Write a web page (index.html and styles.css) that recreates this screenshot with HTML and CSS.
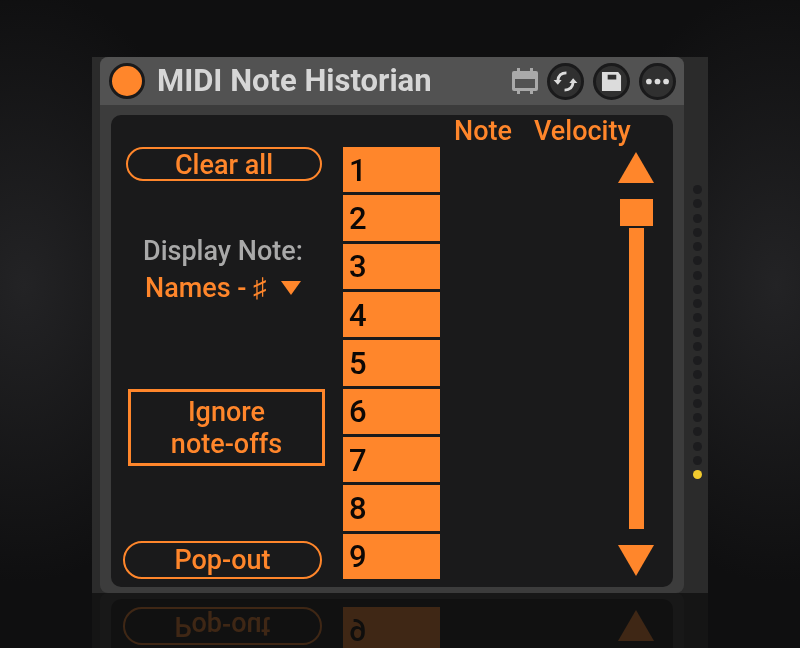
FILE: index.html
```html
<!DOCTYPE html>
<html lang="en">
<head>
    <meta charset="UTF-8">
    <meta name="viewport" content="width=device-width, initial-scale=1.0">
    <title>MIDI Note Historian</title>
    <link rel="stylesheet" href="styles.css">
</head>
<body>

    <main class="device">
        <section class="panel">
            <header class="titlebar">
                <button type="button" class="power" aria-label="Device on"></button>
                <h1>MIDI Note Historian</h1>
                <svg class="view-icon" viewBox="0 0 26 26" aria-hidden="true">
                    <path d="M5 0h3v3h10V0h3v3h3q2 0 2 2v16q0 2-2 2h-3v3h-3v-3H8v3H5v-3H2q-2 0-2-2V5q0-2 2-2h3z M3 11v9h20v-9z" fill="#a9a9a9" fill-rule="evenodd"/>
                </svg>
                <button type="button" class="round" aria-label="Hot-swap">
                    <svg viewBox="0 0 26 22">
                        <path d="M14 2C8.500 2 5.500 5 5 10M12 20C17.500 20 20.500 17 21 12" fill="none" stroke="#dcdcdc" stroke-width="3"/>
                        <path d="M0.500 9.500h8.500l-4 5zM17 12.500h8.500l-4.500-5z" fill="#dcdcdc"/>
                    </svg>
                </button>
                <button type="button" class="round" aria-label="Save preset">
                    <svg viewBox="0 0 26 22">
                        <path d="M3 1h17l3 4v16H3zM9 4v5h9V4z" fill="#dcdcdc" fill-rule="evenodd"/>
                    </svg>
                </button>
                <button type="button" class="round" aria-label="More options">
                    <svg viewBox="0 0 26 22">
                        <circle cx="4" cy="11" r="3" fill="#dcdcdc"/>
                        <circle cx="13" cy="11" r="3" fill="#dcdcdc"/>
                        <circle cx="22" cy="11" r="3" fill="#dcdcdc"/>
                    </svg>
                </button>
            </header>

            <div class="screen">
                <div class="controls">
                    <button type="button" class="pill">Clear all</button>
                    <div class="display">
                        <label for="noteDisplay">Display Note:</label>
                        <div class="picker">
                            <select id="noteDisplay">
                                <option>Names - ♯</option>
                            </select>
                            <svg class="caret" viewBox="0 0 20 14" aria-hidden="true"><path d="M0 0h20L10 14z" fill="#ff862b"/></svg>
                        </div>
                    </div>
                    <button type="button" class="toggle">Ignore<br>note-offs</button>
                    <button type="button" class="pill popout">Pop-out</button>
                </div>

                <ol class="slots">
                    <li>1</li>
                    <li>2</li>
                    <li>3</li>
                    <li>4</li>
                    <li>5</li>
                    <li>6</li>
                    <li>7</li>
                    <li>8</li>
                    <li>9</li>
                </ol>

                <div class="history">
                    <div class="headings">
                        <span>Note</span>
                        <span>Velocity</span>
                    </div>
                    <div class="scroller">
                        <button type="button" class="arrow" aria-label="Scroll up">
                            <svg viewBox="0 0 36 31"><path d="M18 0l18 31H0z" fill="#ff862b"/></svg>
                        </button>
                        <input type="range" class="scroll" min="0" max="100" value="0" aria-label="Scroll history">
                        <button type="button" class="arrow" aria-label="Scroll down">
                            <svg viewBox="0 0 36 31"><path d="M0 0h36L18 31z" fill="#ff862b"/></svg>
                        </button>
                    </div>
                </div>
            </div>
        </section>

        <div class="meter">
            <i></i><i></i><i></i><i></i><i></i><i></i><i></i>
            <i></i><i></i><i></i><i></i><i></i><i></i><i></i>
            <i></i><i></i><i></i><i></i><i></i><i></i><i class="lit"></i>
        </div>
    </main>

</body>
</html>
```
FILE: styles.css
```css
* {
    box-sizing: border-box;
}
html {
    height: 100%;
    overflow: hidden;
}
body {
    margin: 0;
    min-height: 100%;
    padding-top: 57px;
    overflow: hidden;
    font-family: Roboto, "Liberation Sans", sans-serif;
    font-size: 27px;
    font-weight: 500;
    line-height: 32px;
    color: #ff862b;
    background:
        radial-gradient(ellipse 24% 46% at 3% 44%, #232325, transparent),
        radial-gradient(ellipse 24% 46% at 97% 44%, #232325, transparent),
        #0f0f10;
}
button, select {
    font: inherit;
    color: inherit;
    background: none;
    border: none;
    padding: 0;
    cursor: pointer;
}
svg {
    display: block;
}
.device {
    width: 77%;
    margin: 0 auto;
    padding-left: 8px;
    display: flex;
    background-color: #2b2b2b;
    -webkit-box-reflect: below 0 linear-gradient(rgba(0, 0, 0, 0.2), rgba(0, 0, 0, 0.2));
}
.panel {
    flex: 1;
    padding-bottom: 6px;
    background-color: #3c3c3c;
    border-radius: 8px;
    overflow: hidden;
}

/* title bar */
.titlebar {
    display: flex;
    align-items: center;
    gap: 9px;
    height: 48px;
    padding: 0 8px 0 9px;
    background-color: #525252;
}
.titlebar h1 {
    flex: 1;
    margin: 0 0 0 3px;
    font-size: 31px;
    font-weight: 700;
    color: #d6d6d6;
}
.power {
    width: 36px;
    height: 36px;
    border: 3px solid #1a1a1b;
    border-radius: 50%;
    background-color: #ff862b;
}
.view-icon {
    width: 26px;
    height: 26px;
}
.round {
    display: grid;
    place-items: center;
    width: 37px;
    height: 37px;
    border: 3px solid #1a1a1b;
    border-radius: 50%;
    background-color: #303030;
}
.round svg {
    width: 25px;
    height: 21px;
}

/* main screen */
.screen {
    display: grid;
    grid-template-columns: 1fr 97px 202px;
    column-gap: 14px;
    margin: 10px 11px 0;
    padding: 0 17px 8px 12px;
    border-radius: 10px;
    background-color: #1a1a1b;
}
.controls {
    display: flex;
    flex-direction: column;
    padding: 32px 4px 0 0;
}
.pill {
    height: 34px;
    margin: 0 3px;
    border: 2px solid #ff862b;
    border-radius: 20px;
}
.popout {
    height: 38px;
    margin: auto 3px 0 0;
}
.display {
    margin: 54px 22px 0 20px;
}
.display label {
    display: block;
    margin-bottom: 5px;
    color: #a9a9a9;
    white-space: nowrap;
}
.picker {
    display: grid;
    align-items: center;
    padding-right: 2px;
}
.picker select, .caret {
    grid-area: 1 / 1;
}
.picker select {
    appearance: none;
    padding-left: 2px;
}
.caret {
    justify-self: end;
    width: 20px;
    height: 14px;
    pointer-events: none;
}
.toggle {
    height: 77px;
    margin-top: 85px;
    margin-left: 5px;
    border: 3px solid #ff862b;
}
.slots {
    display: grid;
    grid-auto-rows: 1fr;
    gap: 3px;
    min-height: 432px;
    margin: 32px 0 0;
    padding: 0;
    list-style: none;
}
.slots li {
    display: flex;
    align-items: center;
    padding: 2px 0 0 6px;
    font-size: 31px;
    color: #0d0805;
    background-color: #ff862b;
}
.history {
    display: flex;
    flex-direction: column;
}
.headings {
    display: flex;
    gap: 22px;
}
.scroller {
    display: flex;
    flex: 1;
    flex-direction: column;
    align-items: center;
    align-self: flex-end;
    gap: 16px;
    padding: 5px 2px 3px 0;
}
.arrow svg {
    width: 36px;
    height: 31px;
}
.scroll {
    flex: 1;
    width: 33px;
    margin: 0;
    writing-mode: vertical-lr;
    appearance: none;
    background: linear-gradient(#ff862b, #ff862b) center / 15px 100% no-repeat;
}
.scroll::-webkit-slider-thumb {
    appearance: none;
    width: 33px;
    height: 27px;
    background-color: #ff862b;
    box-shadow: 0 0 0 2px #1a1a1b;
}

/* level meter */
.meter {
    display: flex;
    flex-direction: column;
    align-items: center;
    justify-content: space-between;
    width: 24px;
    padding: 128px 0 114px 2px;
}
.meter i {
    width: 9px;
    height: 9px;
    border-radius: 50%;
    background-color: #1c1c1e;
}
.meter .lit {
    background-color: #f2cb2e;
}
```
